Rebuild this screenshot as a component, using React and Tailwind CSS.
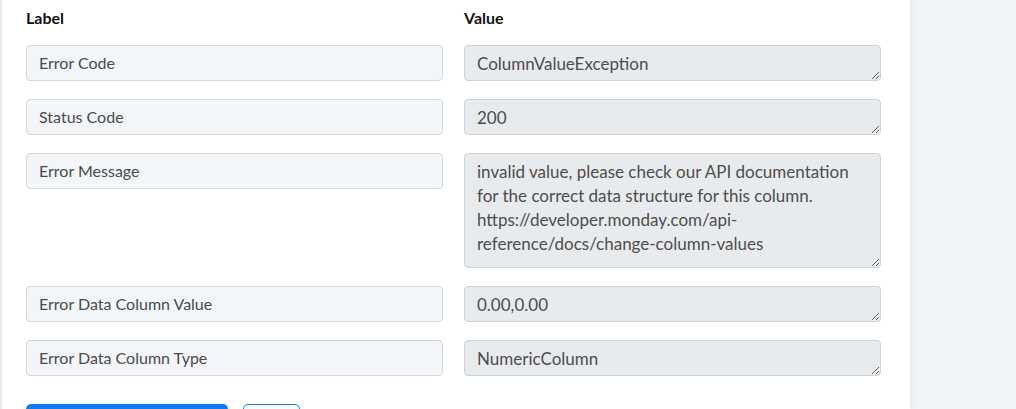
import React from "react";

const rows = [
  { label: "Error Code", value: "ColumnValueException" },
  { label: "Status Code", value: "200" },
  {
    label: "Error Message",
    value:
      "invalid value, please check our API documentation for the correct data structure for this column. https://developer.monday.com/api-reference/docs/change-column-values",
    tall: true,
  },
  { label: "Error Data Column Value", value: "0.00,0.00" },
  { label: "Error Data Column Type", value: "NumericColumn" },
];

export default function App() {
  return (
    <div
      className="flex h-[409px] w-[1016px] overflow-hidden bg-[#f2f5f8]"
      style={{ fontFamily: "Lato, 'Open Sans', sans-serif" }}
    >
      <div className="relative z-10 w-[910px] shrink-0 border-l-2 border-[#e6ebf0] bg-white pl-[24px] pr-[29px] pt-[8px] shadow-[2px_0_6px_rgba(30,50,80,0.06)]">
        <div className="grid grid-cols-2 gap-x-[21px]">
          <div className="text-[16px] font-bold leading-[20px] text-[#111]">Label</div>
          <div className="text-[16px] font-bold leading-[20px] text-[#111]">Value</div>
        </div>
        <div className="mt-[17px] flex flex-col gap-[18px]">
          {rows.map((r) => (
            <div key={r.label} className="grid grid-cols-2 items-start gap-x-[21px]">
              <input
                readOnly
                value={r.label}
                className="h-[36px] w-full rounded-[4px] border border-[#d5d9de] bg-[#f3f6f9] px-[12px] pb-[2px] text-[16px] text-[#4a4a4a] outline-none"
              />
              <textarea
                readOnly
                defaultValue={r.value}
                className={`w-full rounded-[4px] border border-[#ced3d9] bg-[#e8ebee] px-[12px] pt-[6px] pb-[4px] text-[17px] leading-[24px] text-[#4d4d4d] outline-none ${
                  r.tall ? "h-[115px]" : "h-[36px]"
                }`}
              />
            </div>
          ))}
        </div>
        <div className="mt-[28px] flex gap-[15px]">
          <button className="h-[36px] w-[202px] rounded-[5px] bg-[#0a7cff]" />
          <button className="h-[36px] w-[57px] rounded-[5px] border border-[#0a7cff] bg-white" />
        </div>
      </div>
      <div className="flex-1" />
    </div>
  );
}
